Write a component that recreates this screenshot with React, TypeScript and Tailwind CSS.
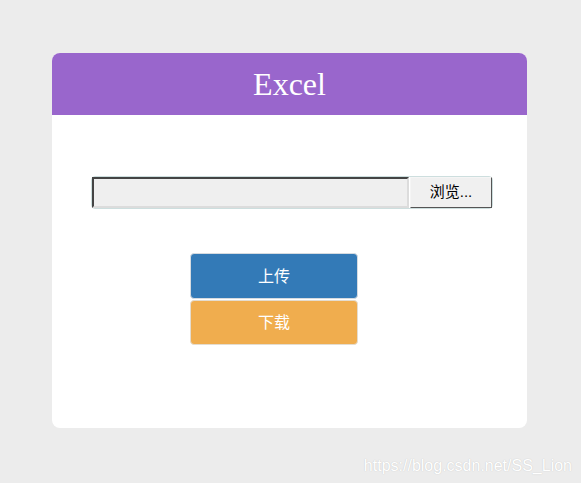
export default function App() {
  return (
    <div className="relative min-h-[483px] w-full bg-[#ececec] pt-[53px] font-['Liberation_Sans','Noto_Sans_CJK_SC',sans-serif]">
      <div className="ml-[52px] w-[475px] overflow-hidden rounded-[8px] bg-white">
        <div className="flex h-[62px] items-center justify-center bg-[#9966cc]">
          <h1 className="font-['Liberation_Serif','Noto_Sans_CJK_SC',serif] text-[32px] leading-none text-white">Excel</h1>
        </div>
        <div className="h-[313px] pt-[61px]">
          <div className="ml-[39px] flex h-[33px] w-[402px] rounded-[4px] border border-[#cddede] bg-white">
            <div className="h-full w-[317px] border-t-2 border-l-2 border-b-2 border-r-2 border-t-[#444] border-l-[#444] border-b-[#dcdcdc] border-r-[#dcdcdc] bg-[#efefef]" />
            <div className="ml-[1px] flex h-full flex-1 items-center justify-center border border-t-[#f5f5f5] border-l-[#f5f5f5] border-r-[#555] border-b-[#555] bg-[#f0f0f0] text-[15px] text-black">
              浏览...
            </div>
          </div>
          <div className="ml-[138px] mt-[44px] flex w-[168px] flex-col gap-[1px]">
            <button className="h-[46px] rounded-[4px] border border-[#d6dbe0] bg-[#337ab7] pt-[1px] text-[16px] text-white">上传</button>
            <button className="h-[45px] rounded-[4px] border border-[#e4dccf] bg-[#f0ad4e] text-[16px] text-white">下载</button>
          </div>
        </div>
      </div>
      <div className="absolute right-[9px] top-[454px] text-[16px] text-white [text-shadow:0_0_1px_#bbb]">
        https://blog.csdn.net/SS_Lion
      </div>
    </div>
  );
}
